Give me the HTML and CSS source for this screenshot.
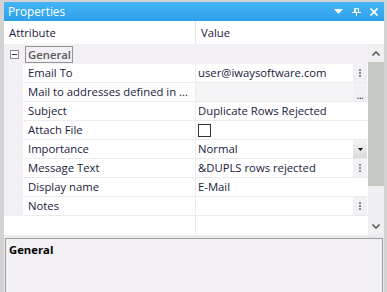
FILE: index.html
```html
<!DOCTYPE html>
<html>
<head>
<meta charset="utf-8">
<link rel="stylesheet" href="styles.css">
</head>
<body>
<div class="window">
  <div class="titlebar">
    <span class="title">Properties</span>
    <div class="tools">
      <svg class="tool" width="9" height="6" viewBox="0 0 9 6"><polygon points="0,0 9,0 4.5,5" fill="#fff"/></svg>
      <svg class="tool" width="9" height="8" viewBox="0 0 9 8"><path d="M2.5 0.5h4v4h-4z M3.5 0.5v4" fill="none" stroke="#fff" stroke-width="1"/><path d="M0 4.5h9 M4.5 4.5v3.5" stroke="#fff" stroke-width="1"/></svg>
      <svg class="tool" width="8" height="8" viewBox="0 0 8 8"><path d="M0.5 0.5l7 7 M7.5 0.5l-7 7" stroke="#fff" stroke-width="1.8"/></svg>
    </div>
  </div>
  <div class="header">
    <div class="hcell hattr">Attribute</div>
    <div class="hcell hval">Value</div>
  </div>
  <div class="body">
    <div class="grid">
      <div class="cat">
        <span class="toggle"><svg width="9" height="9" viewBox="0 0 9 9"><rect x="0.5" y="0.5" width="8" height="8" fill="#fff" stroke="#8c8c8c"/><path d="M2 4.5h5" stroke="#333"/></svg></span>
        <span class="catname">General</span>
      </div>
      <div class="rows">
        <div class="row"><div class="attr">Email To</div><div class="val"><span class="vtext">user@iwaysoftware.com</span><span class="btn dots"><i></i><i></i><i></i></span></div></div>
        <div class="row"><div class="attr">Mail to addresses defined in ...</div><div class="val ro"><span class="vtext"></span><span class="btn ell">...</span></div></div>
        <div class="row"><div class="attr">Subject</div><div class="val"><span class="vtext">Duplicate Rows Rejected</span></div></div>
        <div class="row"><div class="attr">Attach File</div><div class="val"><span class="check"></span></div></div>
        <div class="row"><div class="attr">Importance</div><div class="val"><span class="vtext">Normal</span><span class="btn drop"><svg width="5" height="3" viewBox="0 0 5 3"><polygon points="0,0 5,0 2.5,3" fill="#111"/></svg></span></div></div>
        <div class="row"><div class="attr">Message Text</div><div class="val"><span class="vtext">&amp;DUPLS rows rejected</span><span class="btn dots"><i></i><i></i><i></i></span></div></div>
        <div class="row"><div class="attr">Display name</div><div class="val"><span class="vtext">E-Mail</span></div></div>
        <div class="row"><div class="attr">Notes</div><div class="val"><span class="vtext"></span><span class="btn dots"><i></i><i></i><i></i></span></div></div>
      </div>
      <div class="filler"><div class="fattr"></div><div class="fval"></div></div>
    </div>
    <div class="scrollbar">
      <div class="arrow"><svg width="8" height="5" viewBox="0 0 8 5"><path d="M0.5 4.5l3.5-3.5 3.5 3.5" fill="none" stroke="#5f5f5f" stroke-width="1.6"/></svg></div>
      <div class="track"><div class="thumb"></div></div>
      <div class="arrow"><svg width="8" height="5" viewBox="0 0 8 5"><path d="M0.5 0.5l3.5 3.5 3.5-3.5" fill="none" stroke="#5f5f5f" stroke-width="1.6"/></svg></div>
    </div>
  </div>
  <div class="descwrap">
    <div class="desc"><span class="dtitle">General</span></div>
  </div>
</div>
</body>
</html>
```
FILE: styles.css
```css
html, body {
  margin: 0;
  padding: 0;
}
body {
  width: 387px;
  height: 292px;
  overflow: hidden;
  background: #d3d3d3;
  font-family: "Open Sans", "Noto Sans", sans-serif;
  font-size: 11.3px;
  color: #181a3c;
}
.window {
  margin: 2px 3px 0 4px;
  width: 380px;
  height: 290px;
  display: flex;
  flex-direction: column;
  background: #fff;
}
.titlebar {
  height: 19px;
  flex: none;
  background: linear-gradient(#45b5f8, #2f9fea);
  display: flex;
  align-items: center;
  justify-content: space-between;
  padding: 0 6px 0 4px;
}
.title {
  color: #fff;
  font-size: 11.8px;
  line-height: 19px;
}
.tools {
  display: flex;
  align-items: center;
  gap: 9px;
  padding-top: 1px;
}
.tool { display: block; }
.header {
  height: 23px;
  flex: none;
  display: flex;
  background: #fff;
}
.hcell {
  line-height: 23px;
}
.hattr {
  width: 186px;
  padding-left: 5px;
  border-right: 1px solid #e3e3e3;
}
.hval {
  padding-left: 5px;
}
.body {
  height: 191px;
  flex: none;
  display: flex;
}
.grid {
  width: 364px;
  display: flex;
  flex-direction: column;
  background: #fff;
}
.cat {
  height: 20px;
  flex: none;
  background: #f2f0f4;
  display: flex;
  align-items: center;
}
.toggle {
  width: 19px;
  display: flex;
  justify-content: center;
  padding-left: 1px;
}
.toggle svg { display: block; }
.catname {
  border: 1px solid #959595;
  height: 15px;
  line-height: 15px;
  padding: 0 1px 0 2px;
  font-weight: 600;
  color: #5a5a5a;
  margin-left: 1px;
}
.rows {
  flex: none;
  border-left: 19px solid #f2f0f4;
}
.row {
  height: 18px;
  display: flex;
  border-bottom: 1px solid #ececef;
}
.attr {
  width: 167px;
  padding-left: 5px;
  line-height: 18px;
  border-right: 1px solid #ececef;
  white-space: nowrap;
  overflow: hidden;
}
.val {
  flex: 1;
  display: flex;
  align-items: stretch;
}
.val.ro { background: #f5f4f7; }
.vtext {
  flex: 1;
  padding-left: 2px;
  line-height: 18px;
  white-space: nowrap;
}
.btn {
  width: 14px;
  margin-right: 1px;
  background: #f2f0f4;
  display: flex;
  align-items: center;
  justify-content: center;
}
.dots {
  flex-direction: column;
  gap: 1px;
}
.dots i {
  display: block;
  width: 2px;
  height: 2px;
  background: #8a8a8a;
}
.ell {
  align-items: flex-end;
  line-height: 12px;
  font-size: 10px;
  color: #222;
  letter-spacing: -0.5px;
}
.drop {
  background: linear-gradient(#f4f4f4, #d9d9d9);
}
.drop svg { display: block; }
.check {
  width: 11px;
  height: 11px;
  border: 1px solid #333;
  margin: 3px 0 0 2px;
  background: #fff;
}
.filler {
  flex: 1;
  display: flex;
}
.fattr {
  width: 191px;
  border-right: 1px solid #ececef;
}
.scrollbar {
  width: 16px;
  background: #f0eff2;
  display: flex;
  flex-direction: column;
}
.arrow {
  height: 18px;
  display: flex;
  align-items: center;
  justify-content: center;
}
.arrow svg { display: block; }
.track {
  flex: 1;
}
.thumb {
  height: 124px;
  background: #c6c8c4;
}
.descwrap {
  flex: 1;
  background: #ebeaed;
  padding: 3px 1px 0 1px;
  display: flex;
}
.desc {
  flex: 1;
  border: 1px solid #a0a0a0;
  border-bottom: none;
  background: #f2f0f4;
  padding: 3px 0 0 3px;
}
.dtitle {
  font-weight: 700;
  color: #000;
}
```
